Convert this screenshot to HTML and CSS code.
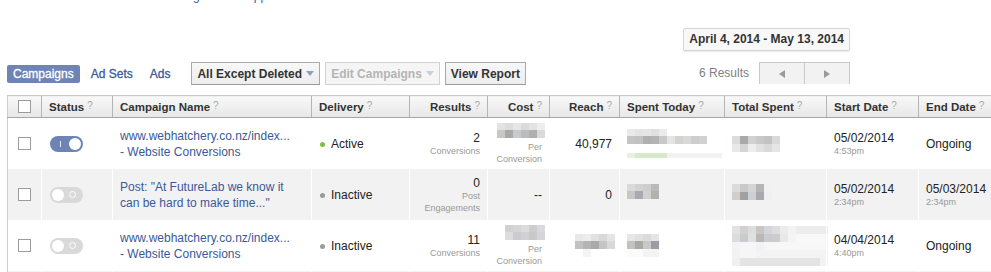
FILE: index.html
```html
<!DOCTYPE html>
<html lang="en">
<head>
  <meta charset="UTF-8" />
  <title>Ads Manager - Campaigns</title>
  <link rel="stylesheet" href="styles.css">
</head>
<body>
  <div class="page">
    <a class="top-link" href="#">Using the free app</a>

    <div class="range-row">
      <div class="range">April 4, 2014 - May 13, 2014</div>
    </div>

    <div class="toolbar">
      <div class="tabs">
        <a class="tab tab-active" href="#">Campaigns</a>
        <a class="tab" href="#">Ad Sets</a>
        <a class="tab" href="#">Ads</a>
      </div>
      <button class="btn">All Except Deleted <span class="caret"></span></button>
      <button class="btn btn-disabled">Edit Campaigns <span class="caret"></span></button>
      <button class="btn">View Report</button>
      <div class="paging">
        <span class="count">6 Results</span>
        <div class="pager">
          <span class="page-btn"><span class="arrow-left"></span></span>
          <span class="page-btn"><span class="arrow-right"></span></span>
        </div>
      </div>
    </div>

    <table class="grid">
      <colgroup>
        <col style="width:34px">
        <col style="width:71px">
        <col style="width:199px">
        <col style="width:98px">
        <col style="width:78px">
        <col style="width:62px">
        <col style="width:70px">
        <col style="width:105px">
        <col style="width:102px">
        <col style="width:92px">
        <col style="width:100px">
      </colgroup>
      <thead>
        <tr>
          <th class="sel"><span class="check"></span></th>
          <th>Status<span class="q">?</span></th>
          <th>Campaign Name<span class="q">?</span></th>
          <th>Delivery<span class="q">?</span></th>
          <th class="right">Results<span class="q">?</span></th>
          <th class="right">Cost<span class="q">?</span></th>
          <th class="right">Reach<span class="q">?</span></th>
          <th>Spent Today<span class="q">?</span></th>
          <th>Total Spent<span class="q">?</span></th>
          <th>Start Date<span class="q">?</span></th>
          <th>End Date<span class="q">?</span></th>
        </tr>
      </thead>
      <tbody>
        <tr>
          <td class="sel"><span class="check"></span></td>
          <td><span class="switch on"></span></td>
          <td><a class="name" href="#">www.webhatchery.co.nz/index...<br>- Website Conversions</a></td>
          <td><span class="dot green"></span>Active</td>
          <td class="right"><div class="num">2</div><div class="sub">Conversions</div></td>
          <td class="right"><span class="blur cost-1"></span><div class="sub">Per<br>Conversion</div></td>
          <td class="right">40,977</td>
          <td><span class="blur today-1"></span><div class="meter"></div></td>
          <td><span class="blur total-1"></span></td>
          <td><div class="num">05/02/2014</div><div class="sub">4:53pm</div></td>
          <td>Ongoing</td>
        </tr>
        <tr>
          <td class="sel"><span class="check"></span></td>
          <td><span class="switch"></span></td>
          <td><a class="name" href="#">Post: "At FutureLab we know it<br>can be hard to make time..."</a></td>
          <td><span class="dot"></span>Inactive</td>
          <td class="right"><div class="num">0</div><div class="sub">Post<br>Engagements</div></td>
          <td class="right">--</td>
          <td class="right">0</td>
          <td><span class="blur today-2"></span></td>
          <td><span class="blur total-2"></span></td>
          <td><div class="num">05/02/2014</div><div class="sub">2:34pm</div></td>
          <td><div class="num">05/03/2014</div><div class="sub">2:34pm</div></td>
        </tr>
        <tr>
          <td class="sel"><span class="check"></span></td>
          <td><span class="switch"></span></td>
          <td><a class="name" href="#">www.webhatchery.co.nz/index...<br>- Website Conversions</a></td>
          <td><span class="dot"></span>Inactive</td>
          <td class="right"><div class="num">11</div><div class="sub">Conversions</div></td>
          <td class="right"><span class="blur cost-3"></span><div class="sub">Per<br>Conversion</div></td>
          <td class="right"><span class="blur reach-3"></span></td>
          <td><span class="blur today-3"></span></td>
          <td><span class="blur total-3"></span></td>
          <td><div class="num">04/04/2014</div><div class="sub">4:40pm</div></td>
          <td>Ongoing</td>
        </tr>
        <tr>
          <td class="sel"><span class="check"></span></td>
          <td><span class="switch"></span></td>
          <td><a class="name" href="#">www.webhatchery.co.nz/index...<br>- Page Post Engagement</a></td>
          <td><span class="dot"></span>Inactive</td>
          <td class="right"><div class="num">0</div><div class="sub">Post<br>Engagements</div></td>
          <td class="right">--</td>
          <td class="right">0</td>
          <td></td>
          <td></td>
          <td><div class="num">04/04/2014</div><div class="sub">4:12pm</div></td>
          <td>Ongoing</td>
        </tr>
      </tbody>
    </table>
  </div>
</body>
</html>
```

FILE: styles.css
```css
body {
  margin: 0;
  font-family: "Liberation Sans", Arial, sans-serif;
  font-size: 12px;
  color: #222;
  background-color: #ffffff;
  overflow: hidden;
}

.page {
  width: 1060px;
  padding-left: 7px;
}

.top-link {
  display: block;
  margin: -11px 0 0 162px;
  line-height: 14px;
  color: #3b5998;
  text-decoration: none;
}

/* date range */
.range-row {
  width: 843px;
  display: flex;
  justify-content: flex-end;
  margin-top: 25px;
}

.range {
  height: 21px;
  line-height: 21px;
  padding: 0 5px;
  border: 1px solid #d6d6d6;
  border-radius: 2px;
  background-color: #f8f8f8;
  box-shadow: 0 1px 1px rgba(0, 0, 0, 0.08);
  font-weight: bold;
  color: #333;
}

/* toolbar */
.toolbar {
  width: 843px;
  height: 23px;
  display: flex;
  align-items: center;
  margin-top: 11px;
}

.tabs {
  display: flex;
  gap: 5px;
  margin-right: 15px;
}

.tab {
  padding: 0 6px;
  line-height: 18px;
  font-size: 12px;
  color: #3b5998;
  text-decoration: none;
  border-radius: 2px;
  -webkit-text-stroke: 0.3px currentColor;
}

.tab-active {
  background-color: #6d84b4;
  color: #fff;
}

.btn {
  height: 23px;
  padding: 0 5px;
  margin-right: 5px;
  border: 1px solid #a9a9a9;
  border-bottom-color: #999;
  background: linear-gradient(#f7f7f7, #ededed);
  font-family: inherit;
  font-size: 12px;
  font-weight: bold;
  color: #333;
  display: flex;
  align-items: center;
}

.btn-disabled {
  color: #b4b4b4;
  border-color: #d2d2d2;
  background: #f5f5f5;
}

.caret {
  width: 0;
  height: 0;
  margin-left: 4px;
  border-left: 4px solid transparent;
  border-right: 4px solid transparent;
  border-top: 5px solid #8b9dc3;
}

.btn-disabled .caret {
  border-top-color: #c8d0e0;
}

.paging {
  margin-left: auto;
  display: flex;
  align-items: center;
  align-self: flex-start;
  height: 22px;
}

.count {
  color: #808080;
  margin-right: 10px;
}

.pager {
  display: flex;
  height: 21px;
  border: 1px solid #c9c9c9;
  border-bottom: none;
  background-color: #f2f2f2;
}

.page-btn {
  width: 44px;
  display: flex;
  justify-content: center;
  align-items: center;
}

.page-btn + .page-btn {
  border-left: 1px solid #c9c9c9;
}

.arrow-left {
  border-top: 4px solid transparent;
  border-bottom: 4px solid transparent;
  border-right: 6px solid #9a9a9a;
}

.arrow-right {
  border-top: 4px solid transparent;
  border-bottom: 4px solid transparent;
  border-left: 6px solid #9a9a9a;
}

/* table */
.grid {
  margin-top: 10px;
  table-layout: fixed;
  border-collapse: collapse;
  width: 1011px;
}

.grid th {
  height: 21px;
  padding: 0 7px;
  border-top: 1px solid #c8c8c8;
  border-bottom: 1px solid #a6a6a6;
  border-left: 1px solid #b5b5b5;
  background: linear-gradient(#f8f8f8, #e7e7e7);
  text-align: left;
  font-size: 11.5px;
  font-weight: bold;
  color: #333;
  white-space: nowrap;
}

.grid td {
  height: 51px;
  padding: 0 7px;
  border-left: 1px solid #fff;
  vertical-align: middle;
  white-space: nowrap;
}

.grid th.sel,
.grid td.sel {
  padding: 0 0 0 10px;
  border-left: 1px solid #cfcfcf;
}

.grid tbody tr:nth-child(even) td {
  background-color: #f2f2f2;
}

.grid .right {
  text-align: right;
}

.q {
  margin-left: 3px;
  font-size: 10px;
  font-weight: normal;
  color: #aaa;
  vertical-align: 2px;
}

.check {
  display: block;
  width: 11px;
  height: 11px;
  border: 1px solid #9c9c9c;
  background-color: #fff;
}

/* status switch */
.switch {
  display: block;
  position: relative;
  width: 33px;
  height: 16px;
  margin-left: 1px;
  border-radius: 8px;
  background-color: #d9d9d9;
}

.switch::before {
  content: "";
  position: absolute;
  top: 2px;
  left: 2px;
  width: 12px;
  height: 12px;
  border-radius: 50%;
  background-color: #fff;
}

.switch::after {
  content: "";
  position: absolute;
  top: 4px;
  left: 19px;
  width: 5px;
  height: 5px;
  border: 1.5px solid #fff;
  border-radius: 50%;
}

.switch.on {
  background-color: #6d84b4;
}

.switch.on::before {
  left: 19px;
}

.switch.on::after {
  top: 5px;
  left: 10px;
  width: 1px;
  height: 6px;
  border: none;
  border-radius: 0;
  background-color: #e3e8f2;
}

.name {
  display: block;
  line-height: 16px;
  color: #3b5998;
  text-decoration: none;
}

.dot {
  display: inline-block;
  width: 5px;
  height: 5px;
  margin: 0 6px 1px 1px;
  border-radius: 50%;
  background-color: #9a9a9a;
}

.dot.green {
  background-color: #80bd3e;
}

.num {
  line-height: 14px;
}

.sub {
  font-size: 9px;
  line-height: 12px;
  color: #999;
}

/* hidden amounts */
.blur {
  display: block;
  background-repeat: no-repeat;
}

.right .blur {
  margin-left: auto;
}

.cost-1 {
  width: 48px;
  height: 15px;
  margin-right: -3px;
  background:
    linear-gradient(90deg, #e4e1e1 0 8px, #dcdcdc 8px 16px, #e6e6e6 16px 24px, #d9dadc 24px 32px, #e3e3e3 32px 40px, #ededed 40px 48px) 0 0 / 48px 7px no-repeat,
    linear-gradient(90deg, #ccc7c7 0 8px, #a9a9a9 8px 16px, #c7cacd 16px 24px, #bcbcbc 24px 32px, #afafaf 32px 40px, #d9d9d9 40px 48px) 0 7px / 48px 8px no-repeat;
  margin-bottom: 3px;
}

.cost-3 {
  width: 40px;
  height: 15px;
  margin-right: -3px;
  margin-bottom: 3px;
  background:
    linear-gradient(90deg, #d1d1d1 0 8px, #d5d5d5 8px 16px, #dcdcdc 16px 24px, #cdcdcd 24px 32px, #d9d9dd 32px 40px) 0 0 / 40px 7px no-repeat,
    linear-gradient(90deg, #dddddd 0 8px, #c9cdd1 8px 16px, #d1d1d1 16px 24px, #c9c9c9 24px 32px, #d5d5d9 32px 40px) 0 7px / 40px 8px no-repeat;
}

.reach-3 {
  width: 40px;
  height: 23px;
  margin-right: -3px;
  background:
    linear-gradient(90deg, #e9e9e9 0 8px, #ececec 8px 16px, #e1e1e1 16px 24px, #d9d9d9 24px 32px, #e5e5e5 32px 40px) 0 0 / 40px 7px no-repeat,
    linear-gradient(90deg, #c1c1c1 0 8px, #b5b5b9 8px 16px, #a9a9a9 16px 24px, #c5c5c5 24px 32px, #d9d9d9 32px 40px) 0 7px / 40px 8px no-repeat,
    linear-gradient(90deg, #fff 0 8px, #f6f3f3 8px 16px, #fff 16px 40px) 0 15px / 40px 8px no-repeat;
}

.today-1 {
  width: 80px;
  height: 15px;
  background:
    linear-gradient(90deg, #e9e9e9 0 8px, #e2e4e6 8px 16px, #e6e6e6 16px 24px, #e0e0e0 24px 32px, #ebebeb 32px 40px) 0 0 / 40px 7px no-repeat,
    linear-gradient(90deg, #c4c4c4 0 8px, #bfc2c6 8px 16px, #b0b0b0 16px 24px, #b3b3b3 24px 32px, #c9c9c9 32px 40px, #e4e4e4 40px 48px, #d6d2d2 48px 56px, #d9d9d9 56px 64px, #cdcdcd 64px 72px, #d2d2d2 72px 80px) 0 7px / 80px 8px no-repeat;
}

.meter {
  width: 95px;
  height: 5px;
  margin-top: 9px;
  background: linear-gradient(90deg, #e8f0e0 0 8px, #d8e9cb 8px 40px, #f2f2f2 40px);
}

.today-2 {
  width: 32px;
  height: 15px;
  margin-top: -6px;
  background:
    linear-gradient(90deg, #dadada 0 8px, #d2d2d2 8px 16px, #cecece 16px 24px, #bababa 24px 32px) 0 0 / 32px 7px no-repeat,
    linear-gradient(90deg, #cac6c6 0 8px, #a9a9b1 8px 16px, #d1d1d1 16px 24px, #b1b1b1 24px 32px) 0 7px / 32px 8px no-repeat;
}

.today-3 {
  width: 32px;
  height: 23px;
  background:
    linear-gradient(90deg, #e7e7e7 0 8px, #e1e1e1 8px 16px, #dbdbdb 16px 24px, #e5e5e5 24px 32px) 0 0 / 32px 7px no-repeat,
    linear-gradient(90deg, #c5c1c1 0 8px, #a9a9a9 8px 16px, #c9c9c9 16px 24px, #999da5 24px 32px) 0 7px / 32px 8px no-repeat,
    linear-gradient(90deg, #fbfbfb 0 16px, #f4f4f4 16px 32px) 0 15px / 32px 8px no-repeat;
}

.total-1 {
  width: 48px;
  height: 16px;
  background:
    linear-gradient(90deg, #dfdbdb 0 8px, #a9a9a9 8px 16px, #d1d1d1 16px 24px, #c9c9cd 24px 32px, #c2c2c2 32px 40px, #d9d9d9 40px 48px) 0 0 / 48px 8px no-repeat,
    linear-gradient(90deg, #ebe7e7 0 8px, #d5d5d5 8px 16px, #ededed 16px 24px, #e1e1e1 24px 32px, #d9d9dd 32px 40px, #e5e5e5 40px 48px) 0 8px / 48px 8px no-repeat;
}

.total-2 {
  width: 40px;
  height: 16px;
  margin-top: -6px;
  background:
    linear-gradient(90deg, #dedada 0 8px, #c9c9c9 8px 16px, #d5d5d5 16px 24px, #b5b5b5 24px 32px, #f1f1f1 32px 40px) 0 0 / 40px 8px no-repeat,
    linear-gradient(90deg, #d1cdcd 0 8px, #a1a1a1 8px 16px, #cdd1d5 16px 24px, #a9a9a9 24px 32px, #eef0f4 32px 40px) 0 8px / 40px 8px no-repeat;
}

.total-3 {
  width: 96px;
  height: 40px;
  background:
    linear-gradient(90deg, #e5e1e1 0 8px, #d1d1d1 8px 16px, #dddddd 16px 24px, #c9c5c5 24px 32px, #d5d5d9 32px 40px, #dddddd 40px 48px, #ebebeb 48px 56px, #f3f3f3 56px 64px, #ececec 64px 72px) 0 0 / 96px 8px no-repeat,
    linear-gradient(90deg, #dcdcdc 0 8px, #c8ccd0 8px 16px, #e0e0e0 16px 24px, #b8b8b8 24px 32px, #c8ccd0 32px 40px, #cccccc 40px 48px, #e8e8e8 48px 56px, #f4f4f4 56px 64px, #f8f8f8 64px 72px) 0 8px / 96px 8px no-repeat,
    linear-gradient(90deg, #f3f3f6 0 8px, #f6f6f9 8px 24px, #f1f1f1 24px 32px, #f7f7f7 32px 48px) 0 16px / 96px 8px no-repeat,
    linear-gradient(90deg, #f2f2f2 0 8px, #f6f6f6 8px 24px, #f3f3f3 24px 40px) 0 24px / 96px 8px no-repeat,
    linear-gradient(90deg, #f0f0f0 0 8px, #e4e4e4 8px 88px, #f2f2f2 88px 96px) 0 32px / 96px 8px no-repeat;
}
```
